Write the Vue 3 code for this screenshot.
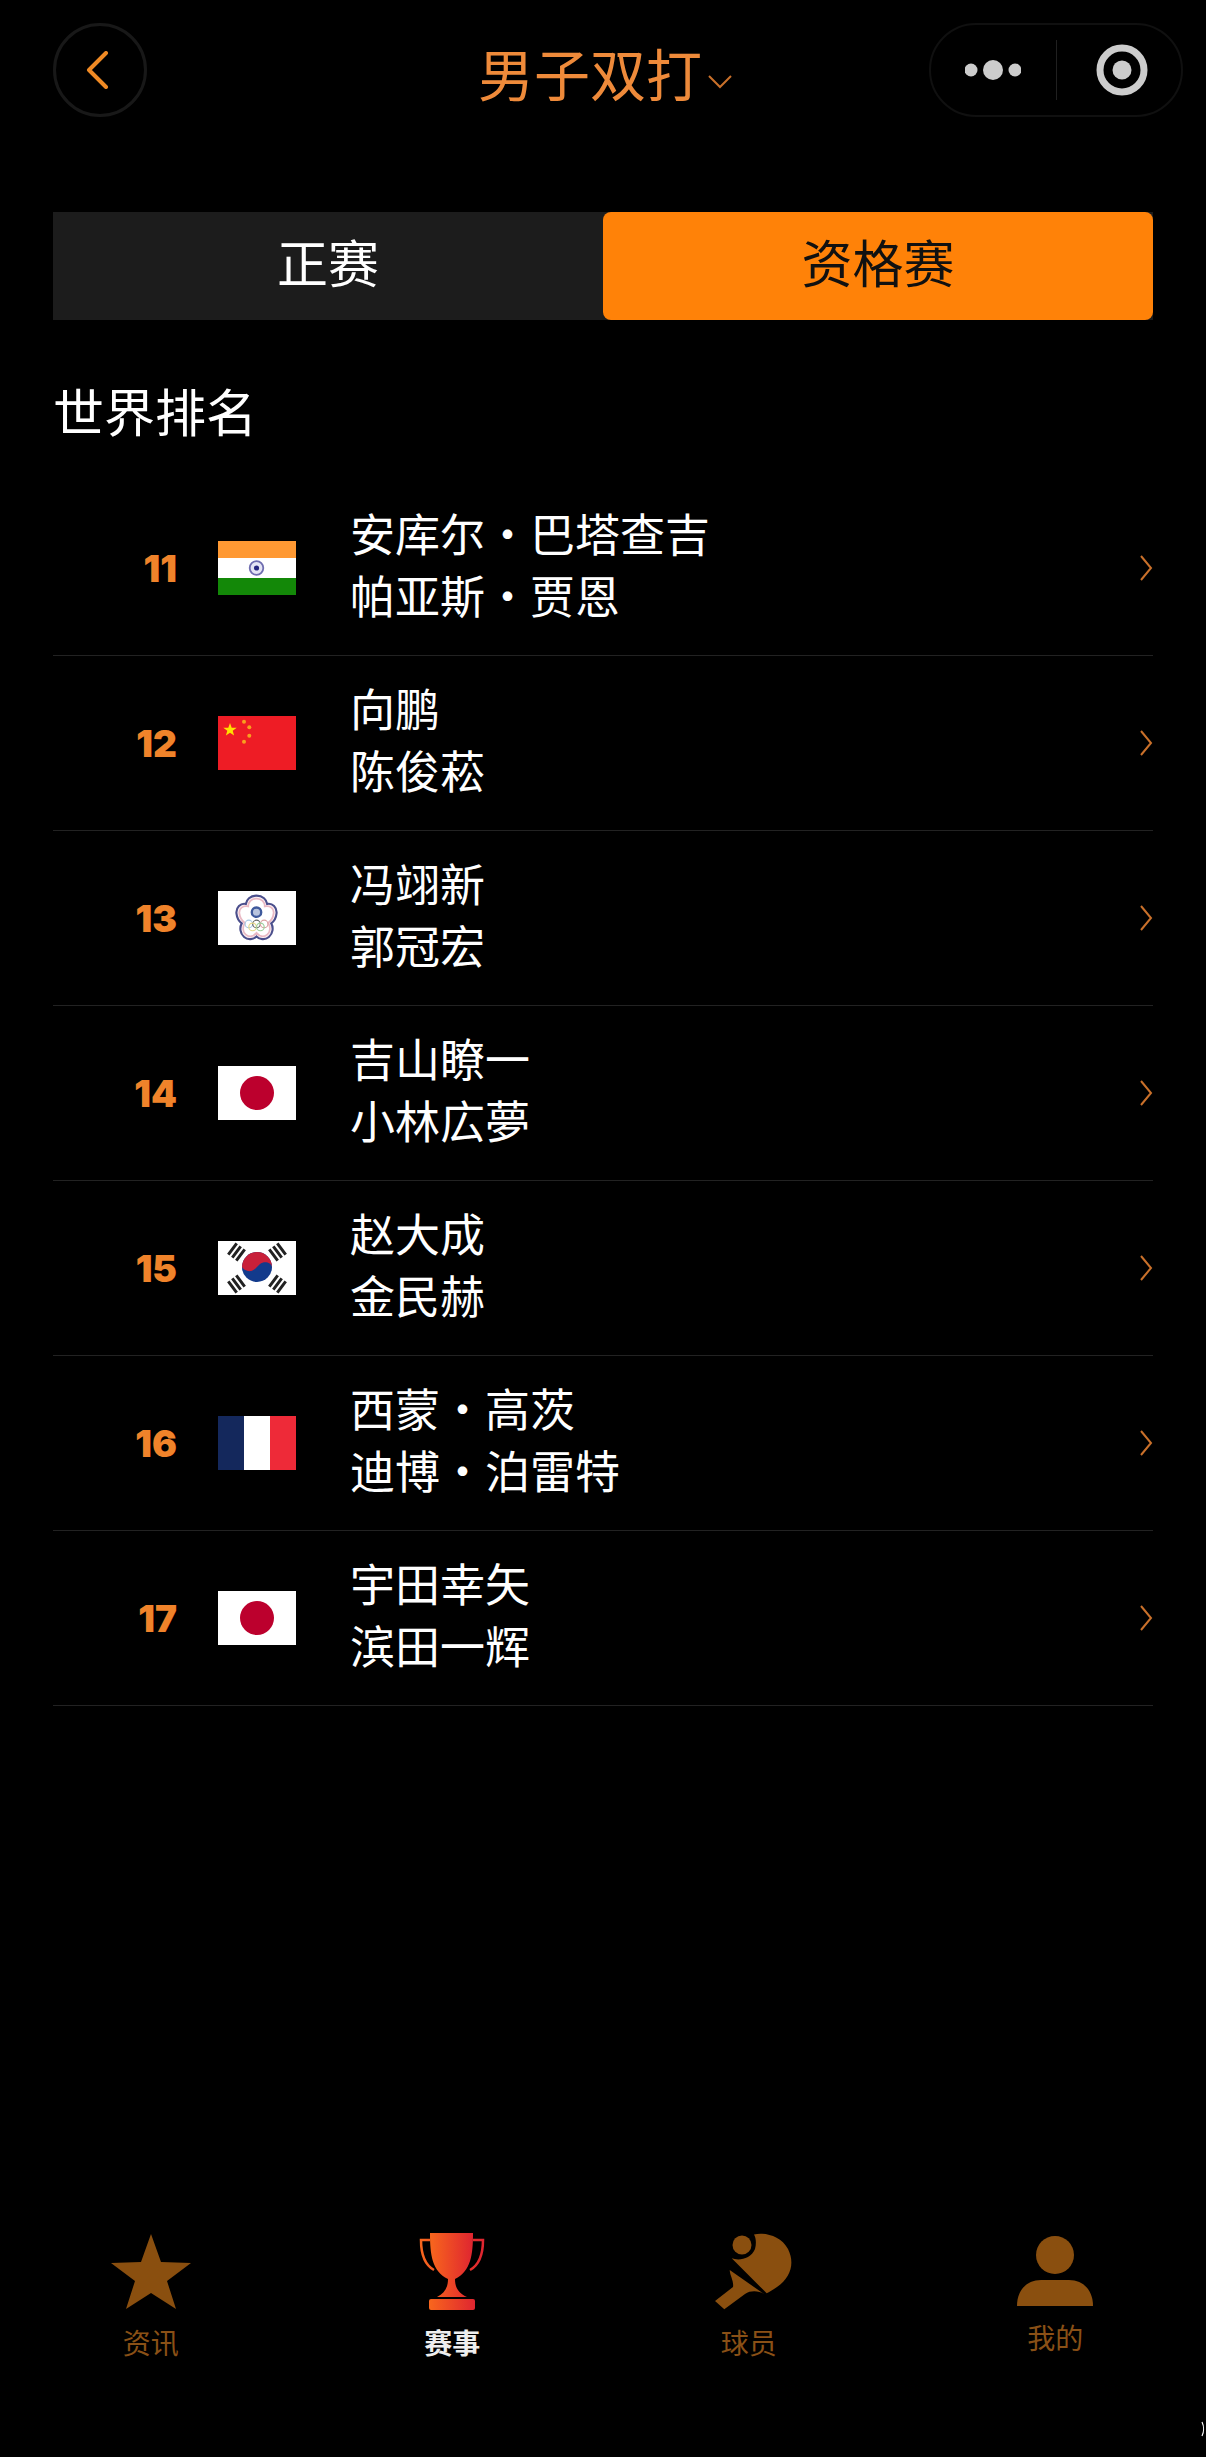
<script setup>
const players = [
  { rank: 11, flag: 'ind', names: ['安库尔·巴塔查吉', '帕亚斯·贾恩'] },
  { rank: 12, flag: 'chn', names: ['向鹏', '陈俊菘'] },
  { rank: 13, flag: 'tpe', names: ['冯翊新', '郭冠宏'] },
  { rank: 14, flag: 'jpn', names: ['吉山瞭一', '小林広夢'] },
  { rank: 15, flag: 'kor', names: ['赵大成', '金民赫'] },
  { rank: 16, flag: 'fra', names: ['西蒙·高茨', '迪博·泊雷特'] },
  { rank: 17, flag: 'jpn', names: ['宇田幸矢', '滨田一辉'] }
]
</script>

<template>
  <div class="page">
    <header class="nav">
      <button class="back">
        <svg width="24" height="38" viewBox="0 0 24 38">
          <path d="M21 2 L4 19 L21 36" fill="none" stroke="#f08a24" stroke-width="4" stroke-linecap="round" stroke-linejoin="round" />
        </svg>
      </button>
      <div class="title">
        <span>男子双打</span>
        <svg class="title-arrow" width="24" height="14" viewBox="0 0 24 14">
          <path d="M1 1 L12 12 L23 1" fill="none" stroke="#c9702a" stroke-width="2" />
        </svg>
      </div>
      <div class="capsule">
        <svg width="56" height="20" viewBox="0 0 56 20">
          <circle cx="6" cy="10" r="6.5" fill="#ccc" />
          <circle cx="28" cy="10" r="10" fill="#ccc" />
          <circle cx="50" cy="10" r="6.5" fill="#ccc" />
        </svg>
        <i class="capsule-line"></i>
        <svg width="52" height="52" viewBox="0 0 52 52">
          <circle cx="26" cy="26" r="22" fill="none" stroke="#ccc" stroke-width="7" />
          <circle cx="26" cy="26" r="9.500" fill="#ccc" />
        </svg>
      </div>
    </header>

    <div class="tabs">
      <div class="tab">正赛</div>
      <div class="tab active">资格赛</div>
    </div>

    <h2 class="heading">世界排名</h2>

    <ul class="list">
      <li v-for="item in players" :key="item.rank" class="row">
        <span class="rank">{{ item.rank }}</span>

        <svg class="flag" width="78" height="54" viewBox="0 0 78 54">
          <template v-if="item.flag === 'ind'">
            <rect width="78" height="54" fill="#fff" />
            <rect width="78" height="17" fill="#ff9933" />
            <rect y="37" width="78" height="17" fill="#138808" />
            <circle cx="38.500" cy="27" r="6.800" fill="#e4e4f4" stroke="#6f6db0" stroke-width="1.800" />
            <circle cx="38.500" cy="27" r="2.600" fill="#26267f" />
          </template>
          <template v-else-if="item.flag === 'chn'">
            <rect width="78" height="54" fill="#ee1c25" />
            <polygon points="12,7 13.700,11.700 18.700,11.800 14.700,14.800 16.100,19.600 12,16.800 7.900,19.600 9.300,14.800 5.300,11.800 10.300,11.700" fill="#ffe000" />
            <circle cx="26" cy="5.700" r="2" fill="#f9a01e" />
            <circle cx="31.300" cy="11.300" r="2" fill="#f9a01e" />
            <circle cx="31.300" cy="19.700" r="2" fill="#f9a01e" />
            <circle cx="26" cy="25.700" r="2" fill="#f9a01e" />
          </template>
          <template v-else-if="item.flag === 'tpe'">
            <rect width="78" height="54" fill="#fff" />
            <g transform="translate(38.500 26.500) scale(1.180) translate(-38.500 -23.500)">
              <path d="M38.500 5 C44 5 47 8.500 47.500 12 C52 11 56 15 55.500 20 C55 24.500 53 27 51 28.500 C53 32 52.500 37 49 40 C45.500 43 41 42 38.500 39.500 C36 42 31.500 43 28 40 C24.500 37 24 32 26 28.500 C24 27 22 24.500 21.500 20 C21 15 25 11 29.500 12 C30 8.500 33 5 38.500 5 Z" fill="#fdf2f4" stroke="#4b4f8c" stroke-width="1.800" />
              <path d="M38.500 7.500 C43 7.500 45.500 10.500 45.500 14 C50 13 53.500 16 53 20 C52.500 24 50.500 26.500 48.500 28 C50.500 32 50 36 47.500 38 C44.500 40.500 41 39.500 38.500 36.500 C36 39.500 32.500 40.500 29.500 38 C27 36 26.500 32 28.500 28 C26.500 26.500 24.500 24 24 20 C23.500 16 27 13 31.500 14 C31.500 10.500 34 7.500 38.500 7.500 Z" fill="#fff" stroke="#e9b9c4" stroke-width="1.500" />
              <circle cx="38.500" cy="19" r="4" fill="#b8c4de" stroke="#3f5a9c" stroke-width="2" />
              <g fill="none" stroke-width="1">
                <circle cx="32" cy="29" r="3.200" stroke="#a9c9e4" />
                <circle cx="38.500" cy="29" r="3.200" stroke="#666" />
                <circle cx="45" cy="29" r="3.200" stroke="#dba0a0" />
                <circle cx="35.200" cy="31.500" r="3.200" stroke="#e6d98c" />
                <circle cx="41.800" cy="31.500" r="3.200" stroke="#9ccf9c" />
              </g>
            </g>
          </template>
          <template v-else-if="item.flag === 'jpn'">
            <rect width="78" height="54" fill="#fff" />
            <circle cx="39" cy="27" r="17" fill="#bc002d" />
          </template>
          <template v-else-if="item.flag === 'kor'">
            <rect width="78" height="54" fill="#fff" />
            <circle cx="39" cy="26" r="15" fill="#123a8c" />
            <path d="M24 26 A15 15 0 0 1 54 26 C53 21 46 20 42 23 C38 27 35 31 30 30 C27 29 25 28 24 26 Z" fill="#c8203a" />
            <g stroke="#222" stroke-width="3">
              <path d="M14.300 16.600 L22.700 5.400 M10.300 13.600 L18.700 2.400 M18.300 19.600 L26.700 8.400" />
              <path d="M63.700 16.600 L55.300 5.400 M67.700 13.600 L59.300 2.400 M59.700 19.600 L51.300 8.400" />
              <path d="M14.300 37.400 L22.700 48.600 M10.300 40.400 L18.700 51.600 M18.300 34.400 L26.700 45.600" />
              <path d="M63.700 37.400 L55.300 48.600 M67.700 40.400 L59.300 51.600 M59.700 34.400 L51.300 45.600" />
            </g>
          </template>
          <template v-else>
            <rect width="78" height="54" fill="#fff" />
            <rect width="26" height="54" fill="#14285c" />
            <rect x="52" width="26" height="54" fill="#ee2a38" />
          </template>
        </svg>

        <div class="names">
          <div v-for="name in item.names" :key="name">{{ name }}</div>
        </div>

        <svg class="chevron" width="14" height="28" viewBox="0 0 14 28">
          <path d="M2 2 L12 14 L2 26" fill="none" stroke="#c9702a" stroke-width="2" />
        </svg>
      </li>
    </ul>

    <footer class="tabbar">
      <div class="tabbar-item">
        <svg width="82" height="78" viewBox="0 0 82 78">
          <polygon points="41,1 51,29 81,30 57,48 66,76 41,60 16,76 25,48 1,30 31,29" fill="#8a4f0f" />
        </svg>
        <span>资讯</span>
      </div>
      <div class="tabbar-item current">
        <svg width="66" height="78" viewBox="0 0 66 78">
          <defs>
            <linearGradient id="cup" x1="0" x2="1" y1="0" y2="0">
              <stop offset="0" stop-color="#f8661d" />
              <stop offset="1" stop-color="#df2530" />
            </linearGradient>
          </defs>
          <path d="M11 0 H54 C54 22 52 38 36 46 C36 54 39 60 48 64 H18 C26 60 29 54 29 46 C13 38 11 22 11 0 Z" fill="url(#cup)" />
          <path d="M11 7 H2 C2 22 6 32 15 37 M54 7 H64 C64 22 60 32 51 37" fill="none" stroke="url(#cup)" stroke-width="2.500" />
          <rect x="10" y="66" width="46" height="11" rx="2" fill="url(#cup)" />
        </svg>
        <span>赛事</span>
      </div>
      <div class="tabbar-item shifted">
        <svg width="78" height="78" viewBox="0 0 78 78">
          <circle cx="27" cy="12" r="9.500" fill="#8a4f0f" />
          <path d="M16.700 25.300 C24 28 36 26 40 16 C41.500 10 41 5 39 1.500 C50 -1 66 3 73 16 C80 30 76 44 62 54 C58 57 54 59 51.700 60.300 Z" fill="#8a4f0f" />
          <path d="M14.700 37 L49 61 C44 58 36 57 30 61 L9.300 76.300 L0 68 L18 54 C19 48 15 43 14.700 37 Z" fill="#8a4f0f" />
        </svg>
        <span>球员</span>
      </div>
      <div class="tabbar-item raised">
        <svg width="76" height="70" viewBox="0 0 76 70">
          <circle cx="38" cy="19" r="19" fill="#8a4f0f" />
          <path d="M0 70 C0 54 10 44 24 44 H52 C66 44 76 54 76 70 Z" fill="#8a4f0f" />
        </svg>
        <span>我的</span>
      </div>
    </footer>

    <svg class="corner" width="4" height="16" viewBox="0 0 4 16">
      <path d="M1 1 C3 5 3 11 1 15" fill="none" stroke="#fff" stroke-width="1.200" />
    </svg>
  </div>
</template>

<style>
html,
body {
  background: #000;
}
</style>

<style scoped>
.page {
  position: relative;
  width: 1206px;
  height: 2457px;
  padding: 23px 53px 0;
  box-sizing: border-box;
  display: flex;
  flex-direction: column;
  background: #000;
  color: #fff;
  font-family: "Noto Sans CJK SC", "Liberation Sans", sans-serif;
  overflow: hidden;
}

.nav {
  display: flex;
  align-items: center;
  height: 94px;
  margin-right: -30px;
}

.back {
  width: 94px;
  height: 94px;
  padding: 0 6px 0 0;
  flex: none;
  display: flex;
  align-items: center;
  justify-content: center;
  background: none;
  border: 3px solid #181818;
  border-radius: 50%;
  box-sizing: border-box;
}

.title {
  flex: 1;
  padding: 4px 0 0 134px;
  display: flex;
  align-items: center;
  justify-content: center;
  color: #ee8a3a;
  font-size: 56px;
  line-height: 90px;
}

.title-arrow {
  margin: 20px 0 0 6px;
}

.capsule {
  width: 254px;
  height: 94px;
  flex: none;
  padding: 0 12px 0 34px;
  display: flex;
  align-items: center;
  box-sizing: border-box;
  border: 2px solid #101010;
  border-radius: 47px;
}

.capsule-line {
  width: 1px;
  height: 60px;
  margin: 0 39px 0 35px;
  background: #202020;
}

.tabs {
  display: flex;
  height: 108px;
  margin-top: 95px;
  background: #1c1c1c;
}

.tab {
  flex: 1;
  padding-bottom: 10px;
  box-sizing: border-box;
  display: flex;
  align-items: center;
  justify-content: center;
  font-size: 51px;
  border-radius: 8px;
}

.tab.active {
  background: #ff8208;
  color: #111;
}

.heading {
  margin: 54px 0 0;
  font-size: 51px;
  font-weight: 400;
  line-height: 72px;
}

.list {
  margin: 35px 0 0;
  padding: 0;
  list-style: none;
}

.row {
  height: 175px;
  display: flex;
  align-items: center;
  box-sizing: border-box;
  border-bottom: 1px solid #222;
}

.rank {
  width: 124px;
  flex: none;
  text-align: right;
  color: #f0832a;
  font-family: Inter, "Liberation Sans", sans-serif;
  font-size: 37px;
  font-weight: 900;
}

.flag {
  margin-left: 41px;
  flex: none;
}

.names {
  margin-left: 54px;
  padding-bottom: 8px;
  flex: 1;
  font-size: 45px;
  line-height: 62px;
}

.chevron {
  flex: none;
}

.tabbar {
  margin: auto -53px 0;
  height: 224px;
  display: grid;
  grid-template-columns: repeat(4, 1fr);
}

.tabbar-item {
  display: flex;
  flex-direction: column;
  align-items: center;
  color: #8a5016;
  font-size: 28px;
  line-height: 40px;
}

.tabbar-item svg {
  display: block;
  flex: none;
  margin-bottom: 11px;
}

.tabbar-item.current {
  color: #eee;
  font-weight: 700;
}

.tabbar-item.shifted span {
  margin-right: 10px;
}

.tabbar-item.raised {
  padding-top: 3px;
}

.corner {
  position: absolute;
  right: 1px;
  bottom: 20px;
}
</style>
